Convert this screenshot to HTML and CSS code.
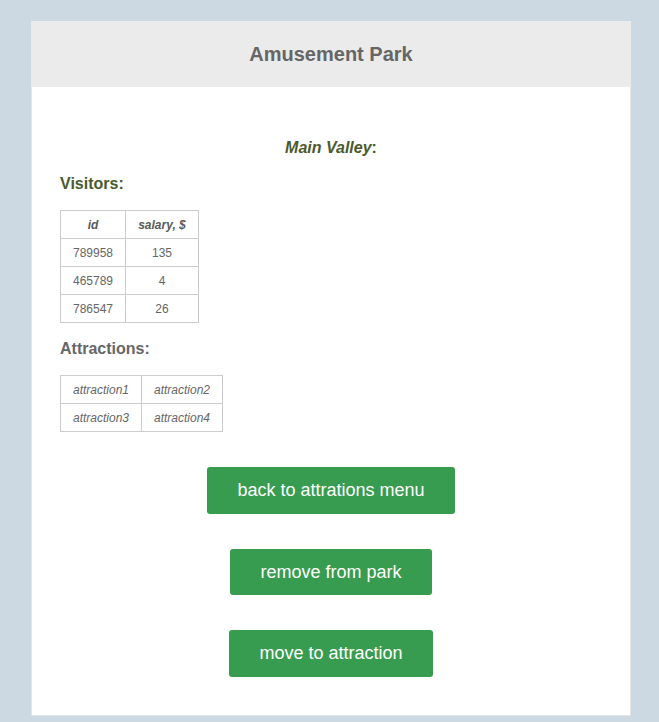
FILE: index.html
```
<!DOCTYPE html>
<html>
<head>
<meta charset="utf-8">
<link rel="stylesheet" href="styles.css">
</head>
<body>
<div class="card">
  <header class="card-header"><h1 class="title">Amusement Park</h1></header>
  <main class="content">
    <p class="area"><em>Main Valley</em>:</p>
    <h2 class="section visitors">Visitors:</h2>
    <table class="grid visitors-table">
      <tr><th class="c1">id</th><th class="c2">salary, $</th></tr>
      <tr><td>789958</td><td>135</td></tr>
      <tr><td>465789</td><td>4</td></tr>
      <tr><td>786547</td><td>26</td></tr>
    </table>
    <h2 class="section attractions">Attractions:</h2>
    <table class="grid attr-table">
      <tr><td>attraction1</td><td>attraction2</td></tr>
      <tr><td>attraction3</td><td>attraction4</td></tr>
    </table>
    <div class="actions">
      <button class="btn">back to attrations menu</button>
      <button class="btn">remove from park</button>
      <button class="btn">move to attraction</button>
    </div>
  </main>
</div>
</body>
</html>
```
FILE: styles.css
```
html, body {
  margin: 0;
  padding: 0;
  background: #cdd9e2;
  font-family: "Liberation Sans", Arial, sans-serif;
}
body {
  padding: 21px 0 0 31px;
  height: 722px;
  box-sizing: border-box;
  overflow: hidden;
}
.card {
  width: 600px;
  box-sizing: border-box;
  background: #fff;
  border: 1px solid #e4e4e4;
  border-top: none;
  padding-bottom: 38px;
}
.card-header {
  background: #ebebeb;
  height: 66px;
  display: flex;
  align-items: center;
  justify-content: center;
  margin: 0 -1px;
}
.title {
  margin: 0;
  font-size: 20px;
  font-weight: bold;
  color: #666;
  line-height: 24px;
}
.content {
  padding: 0 28px;
  display: flex;
  flex-direction: column;
  align-items: flex-start;
}
.area {
  align-self: stretch;
  margin: 52px 0 0;
  text-align: center;
  font-size: 16px;
  line-height: 18px;
  font-weight: bold;
  color: #4b5a2c;
}
.section {
  margin: 0;
  font-size: 16px;
  line-height: 18px;
  font-weight: bold;
}
.visitors {
  margin-top: 18px;
  color: #4b5a2c;
}
.attractions {
  margin-top: 17px;
  color: #666;
}
.grid {
  border-collapse: collapse;
  margin-top: 17px;
  font-size: 12px;
  color: #666;
}
.grid th, .grid td {
  border: 1px solid #cccccc;
  height: 28px;
  padding: 0;
  text-align: center;
  box-sizing: border-box;
}
.grid th {
  font-style: italic;
  font-weight: bold;
  color: #5a5a5a;
}
.visitors-table .c1 { width: 65px; }
.visitors-table .c2 { width: 73px; }
.attr-table td {
  width: 81px;
  font-style: italic;
}
.actions {
  align-self: stretch;
  display: flex;
  flex-direction: column;
  align-items: center;
  gap: 35px;
  margin-top: 35px;
}
.btn {
  font-family: "Liberation Sans", Arial, sans-serif;
  font-size: 18px;
  line-height: 22px;
  color: #fff;
  background: #379c4f;
  border: none;
  border-radius: 3px;
  padding: 12.25px 30px;
}
```
